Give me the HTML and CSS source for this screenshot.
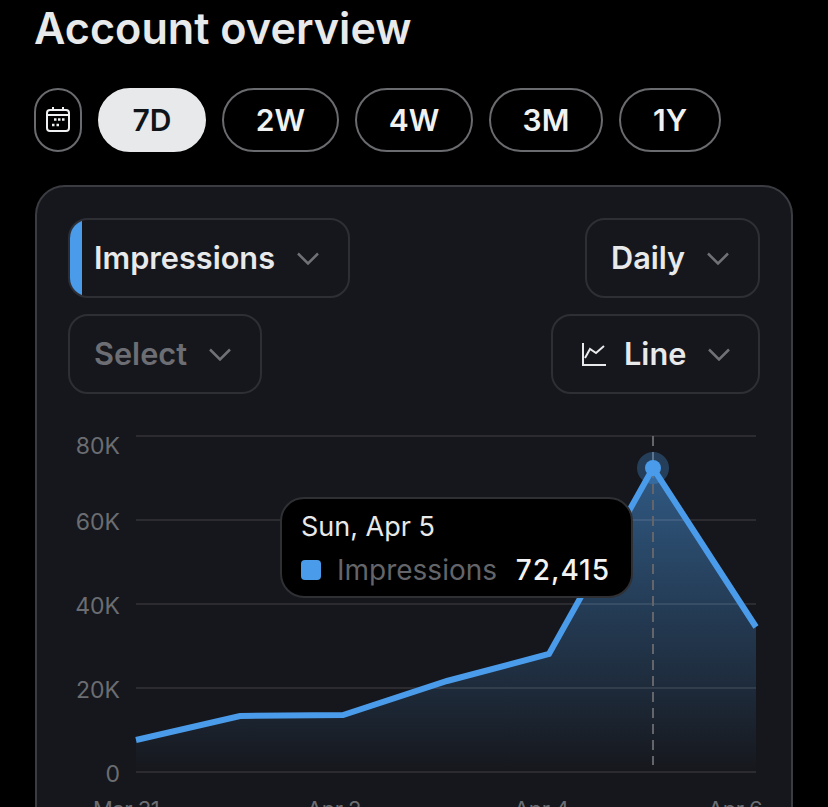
FILE: index.html
```html
<!DOCTYPE html>
<html lang="en">
<head>
    <meta charset="UTF-8">
    <meta name="viewport" content="width=device-width, initial-scale=1.0">
    <title>Account overview</title>
    <link rel="stylesheet" href="styles.css">
</head>
<body>
    <div class="main">
        <h1>Account overview</h1>

        <div class="ranges">
            <button class="pill cal">
                <svg width="26" height="26" viewBox="0 0 26 26" fill="none" stroke="currentColor" stroke-width="2">
                    <rect x="2" y="3" width="22" height="21" rx="3"/>
                    <path d="M2 8h22M8 0v4M18 0v4"/>
                    <path d="M9 12.500h2.500M13 12.500h2.500M17 12.500h2.500M7 18h2.500M11.500 18h2.500" stroke-width="2.500"/>
                </svg>
            </button>
            <button class="pill active">7D</button>
            <button class="pill w2">2W</button>
            <button class="pill w4">4W</button>
            <button class="pill m3">3M</button>
            <button class="pill y1">1Y</button>
        </div>

        <div class="card">
            <div class="row">
                <button class="drop metric">
                    <span class="swatch"></span>
                    Impressions
                    <svg class="chev" width="22" height="13" viewBox="0 0 22 13"><path d="M1 1.500l10 10 10-10"/></svg>
                </button>
                <button class="drop daily">
                    Daily
                    <svg class="chev" width="22" height="13" viewBox="0 0 22 13"><path d="M1 1.500l10 10 10-10"/></svg>
                </button>
            </div>
            <div class="row">
                <button class="drop select">
                    Select
                    <svg class="chev" width="22" height="13" viewBox="0 0 22 13"><path d="M1 1.500l10 10 10-10"/></svg>
                </button>
                <button class="drop line">
                    <svg class="lineicon" width="25" height="25" viewBox="0 0 25 25" fill="none" stroke="currentColor" stroke-width="2">
                        <path d="M2 1v22h23"/>
                        <path d="M4 16l5-9 6 4 8-7"/>
                    </svg>
                    Line
                    <svg class="chev" width="22" height="13" viewBox="0 0 22 13"><path d="M1 1.500l10 10 10-10"/></svg>
                </button>
            </div>

            <div class="chart">
                <svg width="692" height="430" viewBox="68 393 692 430">
                    <defs>
                        <linearGradient id="fade" gradientUnits="userSpaceOnUse" x1="0" y1="468" x2="0" y2="772">
                            <stop offset="0" stop-color="#4a9ceb" stop-opacity="0.5"/>
                            <stop offset="0.7" stop-color="#4a9ceb" stop-opacity="0.16"/>
                            <stop offset="1" stop-color="#4a9ceb" stop-opacity="0"/>
                        </linearGradient>
                    </defs>
                    <path class="area" d="M136 740L240 716 343 715 447 681 549 654 653 468 756 627V772H136Z"/>
                    <g class="grid">
                        <path d="M136 436H756"/>
                        <path d="M136 520H756"/>
                        <path d="M136 604H756"/>
                        <path d="M136 688H756"/>
                        <path d="M136 772H756"/>
                    </g>
                    <g class="ylabels">
                        <text x="120" y="454">80K</text>
                        <text x="120" y="530">60K</text>
                        <text x="120" y="614">40K</text>
                        <text x="120" y="698">20K</text>
                        <text x="120" y="782">0</text>
                    </g>
                    <g class="xlabels">
                        <text x="93" y="817">Mar 31</text>
                        <text x="307" y="817">Apr 2</text>
                        <text x="514" y="817">Apr 4</text>
                        <text x="708" y="817">Apr 6</text>
                    </g>
                    <path class="cursor" d="M653 436V765"/>
                    <path class="plot" d="M136 740L240 716 343 715 447 681 549 654 653 468 756 627"/>
                    <circle class="halo" cx="653" cy="468" r="16"/>
                    <circle class="dot" cx="653" cy="468" r="8"/>
                </svg>
                <div class="tooltip">
                    <div class="date">Sun, Apr 5</div>
                    <div class="entry">
                        <span class="square"></span>
                        <span class="name">Impressions</span>
                        <span class="value">72,415</span>
                    </div>
                </div>
            </div>
        </div>
    </div>
</body>
</html>
```

FILE: styles.css
```css
html, body {
    margin: 0;
    height: 807px;
    overflow: hidden;
    background: #000;
}
body {
    font-family: Inter, "Liberation Sans", sans-serif;
    color: #e7e9ea;
}
.main {
    padding: 0 35px;
}
h1 {
    margin: 0 0 0 -1px;
    padding-top: 3px;
    height: 85px;
    font-size: 43.200px;
    line-height: 50px;
    font-weight: 600;
}
button {
    font-family: inherit;
    background: none;
    color: inherit;
    box-sizing: border-box;
    cursor: pointer;
}

.ranges {
    display: flex;
    gap: 16px;
    height: 64px;
}
.pill {
    height: 64px;
    border: 2px solid #6a6b6f;
    border-radius: 32px;
    font-size: 30px;
    font-weight: 600;
    padding: 0;
    color: #eff1f2;
}
.cal {
    width: 48px;
    margin-left: -1px;
    display: flex;
    align-items: center;
    justify-content: center;
}
.active {
    width: 108px;
    background: #e7e9ea;
    border-color: #e7e9ea;
    color: #0f1419;
}
.w2 { width: 117px; }
.w4 { width: 118px; }
.m3 { width: 114px; }
.y1 { width: 102px; }

.card {
    margin-top: 33px;
    height: 700px;
    box-sizing: border-box;
    border: 2px solid #3b3c41;
    border-radius: 30px;
    background: #16171c;
    padding: 31px 31px 0;
}
.row {
    display: flex;
    justify-content: space-between;
    margin-bottom: 16px;
}
.drop {
    position: relative;
    display: flex;
    align-items: center;
    height: 80px;
    border: 2px solid #2e2f34;
    border-radius: 20px;
    font-size: 30.700px;
    font-weight: 600;
    padding: 0 0 2px 24px;
    overflow: hidden;
    color: #e7e9ea;
}
.metric { width: 282px; }
.daily { width: 175px; }
.select { width: 194px; color: #6c6e73; }
.line { width: 209px; padding-left: 28px; }
.swatch {
    position: absolute;
    left: 0;
    top: 0;
    bottom: 0;
    width: 12px;
    background: #4a9ceb;
}
.chev {
    margin: 2px 0 0 22px;
    fill: none;
    stroke: #6f7176;
    stroke-width: 2.500;
}
.lineicon {
    margin: 2px 18px 0 0;
}

.chart {
    position: relative;
    margin-top: -17px;
}
.chart svg {
    display: block;
    overflow: visible;
}
.grid path {
    stroke: rgba(255, 255, 255, 0.09);
    stroke-width: 2;
    fill: none;
}
.area {
    fill: url(#fade);
}
.plot {
    fill: none;
    stroke: #4a9ceb;
    stroke-width: 6;
    stroke-linejoin: miter;
}
.cursor {
    stroke: #63656a;
    stroke-width: 2;
    stroke-dasharray: 10 6;
    fill: none;
}
.halo {
    fill: #4a9ceb;
    opacity: 0.3;
}
.dot {
    fill: #4a9ceb;
}
.ylabels text {
    font-size: 23px;
    fill: #6b6d72;
    text-anchor: end;
}
.xlabels text {
    font-size: 22px;
    letter-spacing: -0.5px;
    fill: #6b6d72;
}

.tooltip {
    position: absolute;
    left: 212px;
    top: 104px;
    width: 353px;
    height: 101px;
    box-sizing: border-box;
    padding: 11px 21px 0 19px;
    background: #000;
    border: 2px solid #2f3034;
    border-radius: 24px;
}
.date {
    font-size: 27px;
    line-height: 34px;
    color: #e7e9ea;
}
.entry {
    display: flex;
    align-items: center;
    margin-top: 9px;
    font-size: 28px;
    line-height: 34px;
}
.square {
    width: 20px;
    height: 20px;
    border-radius: 4px;
    background: #4a9ceb;
    margin-right: 16px;
}
.name {
    color: #63656a;
}
.value {
    margin-left: auto;
    color: #f2f3f4;
    font-weight: 500;
    letter-spacing: 1px;
}
```
